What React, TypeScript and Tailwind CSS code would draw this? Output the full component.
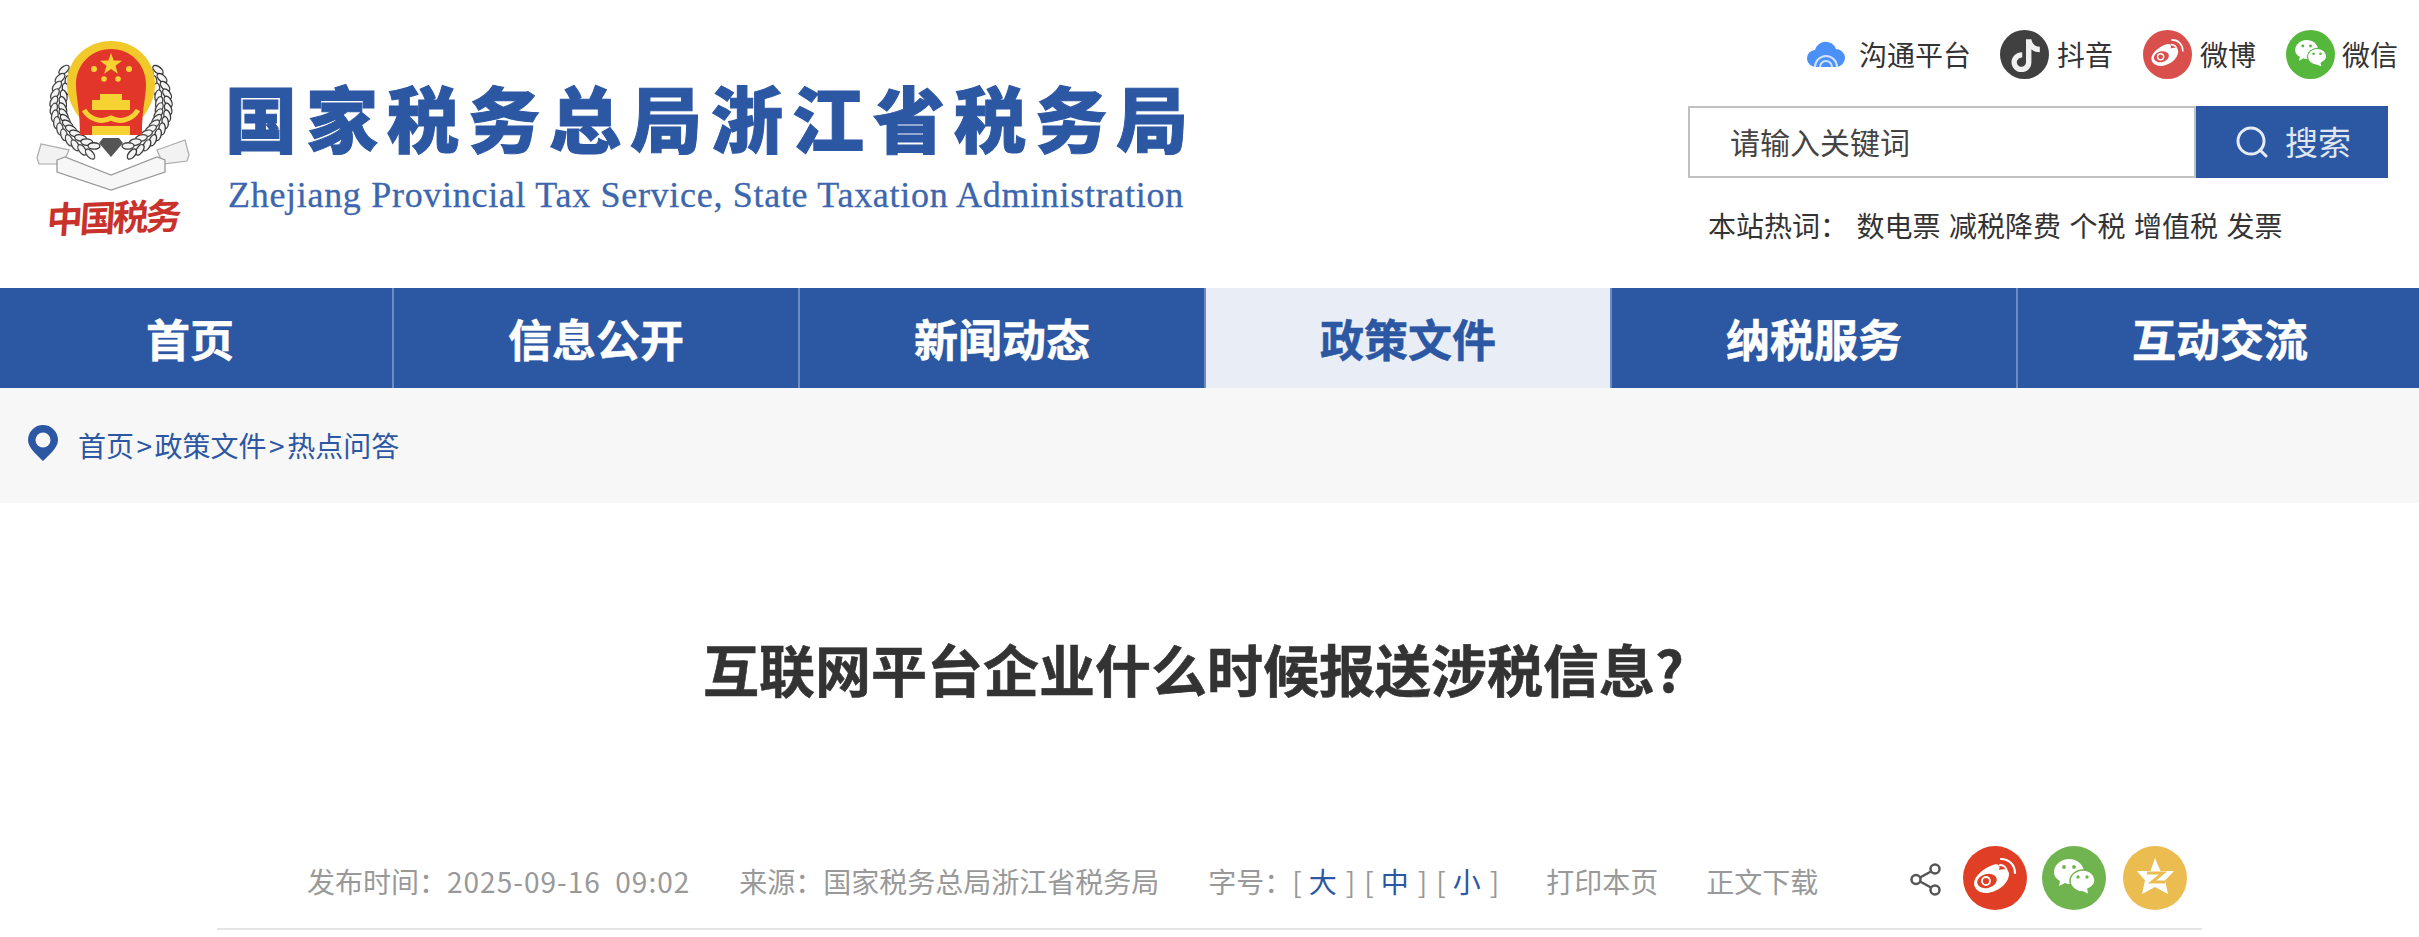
import React from "react";

const BLUE = "#2c57a3";

const navItems = ["首页", "信息公开", "新闻动态", "政策文件", "纳税服务", "互动交流"];
const hotWords = ["数电票", "减税降费", "个税", "增值税", "发票"];

// leaves of the wreath, placed along a curve
const leafPoints = (x0: number, y0: number, cx: number, cy: number, x1: number, y1: number) => {
  const pts = [];
  for (let i = 0; i <= 13; i++) {
    const t = i / 13;
    const x = (1 - t) * (1 - t) * x0 + 2 * t * (1 - t) * cx + t * t * x1;
    const y = (1 - t) * (1 - t) * y0 + 2 * t * (1 - t) * cy + t * t * y1;
    const dx = 2 * (1 - t) * (cx - x0) + 2 * t * (x1 - cx);
    const dy = 2 * (1 - t) * (cy - y0) + 2 * t * (y1 - cy);
    pts.push({ x, y, a: (Math.atan2(dy, dx) * 180) / Math.PI });
  }
  return pts;
};

const WeiboGlyph = ({ color }: { color: string }) => (
  <g fill="none" stroke="#fff">
    <path d="M30 19c5-2 8 1 6 5 6-2 10 0 10 4 0 10-13 19-23 19-7 0-12-4-12-10 0-6 9-15 19-18z" fill="#fff" stroke="none" />
    <ellipse cx="24" cy="35" rx="10" ry="7" fill={color} stroke="none" transform="rotate(-15 24 35)" />
    <circle cx="23" cy="35" r="4" strokeWidth="1.8" />
    <path d="M37 19c4 0 7 3 7 8" strokeWidth="2.200" strokeLinecap="round" />
    <path d="M38 13c8 0 14 6 14 14" strokeWidth="2.200" strokeLinecap="round" />
  </g>
);

const WechatGlyph = ({ color }: { color: string }) => (
  <g>
    <path d="M27 13c-8 0-15 6-15 13 0 4 2 7 6 9l-1 5 6-3c2 1 4 1 6 1 2-8 8-13 13-13-1-7-7-12-15-12z" fill="#fff" />
    <circle cx="22" cy="21" r="1.9" fill={color} />
    <circle cx="32" cy="21" r="1.9" fill={color} />
    <path
      d="M41 24c-7 0-13 5-13 11s6 11 13 11l6 3-1-6c4-2 7-5 7-8 0-6-5-11-12-11z"
      fill="#fff"
      stroke={color}
      strokeWidth="1.500"
    />
    <circle cx="36" cy="31" r="1.700" fill={color} />
    <circle cx="45" cy="31" r="1.700" fill={color} />
  </g>
);

const IconCircle = ({ color, size, children }: { color: string; size: string; children: React.ReactNode }) => (
  <svg viewBox="0 0 64 64" className={size}>
    <circle cx="32" cy="32" r="32" fill={color} />
    {children}
  </svg>
);

const Emblem = () => {
  const left = leafPoints(68, 72, 40, 125, 92, 150);
  const right = leafPoints(154, 72, 182, 125, 130, 150);
  return (
    <svg viewBox="36 40 154 152" className="w-[154px] h-[152px]">
      {[...left, ...right].map((p, i) => (
        <g key={i} transform={`translate(${p.x} ${p.y}) rotate(${p.a})`}>
          <ellipse cx="0" cy="-4.500" rx="6" ry="3.200" fill="#f4f4f4" stroke="#333" strokeWidth="1.300" transform="rotate(-24 0 -4.500)" />
          <ellipse cx="0" cy="4.500" rx="6" ry="3.200" fill="#f4f4f4" stroke="#444" strokeWidth="1.300" transform="rotate(24 0 4.500)" />
        </g>
      ))}
      <path d="M37 158l4-14 28 6-6 14-24 0z" fill="#f2f2f2" stroke="#aaa" strokeWidth="1.200" />
      <path d="M189 155l-4-15-28 10 6 14 24-3z" fill="#f2f2f2" stroke="#aaa" strokeWidth="1.200" />
      <path d="M57 160l8-3 46 18 46-18 8 3 0 12-54 18-54-18z" fill="#f7f7f7" stroke="#999" strokeWidth="1.300" />
      <path d="M99 143l12 14 12-14-4-5h-16z" fill="#555" />
      <path d="M111 41c25 0 44 19 44 43 0 16-8 28-13 34v17H80v-17c-5-6-13-18-13-34 0-24 19-43 44-43z" fill="#f2c92b" />
      <path d="M111 49c20 0 35 16 35 35 0 14-4 24-4 51H80c0-27-4-37-4-51 0-19 15-35 35-35z" fill="#e2362a" />
      <g fill="#f6d233">
        <path d="M111 53l2.700 7.600 8.300.2-6.500 5 2.300 7.900-6.800-4.600-6.800 4.600 2.300-7.900-6.500-5 8.300-.2z" />
        <circle cx="94" cy="69" r="3" />
        <circle cx="129" cy="69" r="3" />
        <circle cx="104" cy="79" r="2.800" />
        <circle cx="118" cy="79" r="2.800" />
        <path d="M100 94h22v6h8v10H92v-10h8z" />
        <path d="M92 126h38v9H92z" />
      </g>
      <path d="M84 110c6 10 18 13 27 8 9 5 21 2 27-8" fill="none" stroke="#f6d233" strokeWidth="5" />
    </svg>
  );
};

const App = () => {
  return (
    <div className="w-full h-[937px] overflow-hidden bg-white font-['Noto_Sans_CJK_SC','Liberation_Sans',sans-serif] text-[28px] text-[#333]">
      <header className="h-[288px] flex justify-between">
        <div className="flex pl-[36px]">
          <div className="w-[154px] shrink-0 pt-[40px] flex flex-col items-center">
            <Emblem />
            <div className="h-[46px] whitespace-nowrap text-[36px] leading-[46px] font-bold text-[#c8322b] -skew-x-6 -rotate-2 -tracking-[3px]">
              中国税务
            </div>
          </div>
          <div className="ml-[35px] pt-[66px]">
            <h1 className="text-[72px] leading-[100px] font-black text-[#2c57a3] tracking-[9px] whitespace-nowrap [-webkit-text-stroke:1px_#2c57a3]">
              国家税务总局浙江省税务局
            </h1>
            <p className="mt-[9px] ml-[3px] font-['Liberation_Serif',serif] text-[36px] leading-[40px] text-[#3c66ad] whitespace-nowrap tracking-[0.7px] [-webkit-text-stroke:0.3px_#3c66ad]">
              Zhejiang Provincial Tax Service, State Taxation Administration
            </p>
          </div>
        </div>
        <div className="w-[731px] shrink-0 pt-[30px] whitespace-nowrap">
          <div className="flex items-center h-[48px] pl-[119px]">
            <svg viewBox="0 0 38 27" className="w-[38px] h-[27px] shrink-0">
              <path d="M9 26a8.500 8.500 0 0 1-1-17A11 11 0 0 1 29 8a9 9 0 0 1 0 18z" fill="#4a90f7" />
              <g fill="none" stroke="#cfe2ff" strokeWidth="2">
                <path d="M8 26a11 11 0 0 1 22 0" />
                <path d="M13 26a6 6 0 0 1 12 0" />
              </g>
            </svg>
            <span className="ml-[14px] leading-[48px]">沟通平台</span>
            <svg viewBox="0 0 64 64" className="ml-[29px] w-[49px] h-[49px] shrink-0">
              <circle cx="32" cy="32" r="32" fill="#404040" />
              <path
                d="M34 12h7c1 6 5 10 11 10v7c-4 0-8-1-11-4v17c0 8-6 13-13 13s-13-6-13-13 6-13 14-13v7c-4 0-7 3-7 6s3 6 6 6 6-3 6-6z"
                fill="#f1f1f1"
              />
            </svg>
            <span className="ml-[8px] leading-[48px]">抖音</span>
            <IconCircle color="#d94f4c" size="ml-[30px] w-[49px] h-[49px] shrink-0">
              <WeiboGlyph color="#d94f4c" />
            </IconCircle>
            <span className="ml-[8px] leading-[48px]">微博</span>
            <IconCircle color="#55b73c" size="ml-[30px] w-[49px] h-[49px] shrink-0">
              <WechatGlyph color="#55b73c" />
            </IconCircle>
            <span className="ml-[7px] leading-[48px]">微信</span>
          </div>
          <div className="mt-[28px] flex h-[72px] w-[700px]">
            <div className="w-[508px] border-2 border-[#c0c0c0] pl-[40px] text-[30px] leading-[66px] text-[#444]">
              请输入关键词
            </div>
            <button className="w-[192px] flex items-center pl-[40px] bg-[#2c57a3] text-[33px] text-[#dfe6f2]">
              <svg viewBox="0 0 32 32" className="w-[32px] h-[32px]" fill="none" stroke="#e6ebf5" strokeWidth="3">
                <circle cx="15" cy="15" r="13" />
                <path d="M24 24l6 6" strokeLinecap="round" />
              </svg>
              <span className="ml-[17px]">搜索</span>
            </button>
          </div>
          <div className="mt-[26px] ml-[20px] flex gap-[8.500px] leading-[42px]">
            <span>本站热词：</span>
            {hotWords.map((w) => (
              <span key={w}>{w}</span>
            ))}
          </div>
        </div>
      </header>

      <nav className="flex h-[100px] -ml-[14px] w-[2436px] bg-[#2c57a3]">
        {navItems.map((item) => (
          <div
            key={item}
            className={
              item === "政策文件"
                ? "w-[406px] shrink-0 text-center text-[44px] font-bold leading-[100px] border-l-2 border-[#6b8cc2] bg-[#e9eef6] text-[#2c57a3] [-webkit-text-stroke:0.5px_#2c57a3]"
                : "w-[406px] shrink-0 text-center text-[44px] font-bold leading-[100px] border-l-2 border-[#6b8cc2] text-white [-webkit-text-stroke:0.5px_#fff]"
            }
          >
            {item}
          </div>
        ))}
      </nav>

      <div className="h-[115px] bg-[#f7f7f7] flex items-center pl-[28px] text-[#2c57a3]">
        <svg viewBox="0 0 30 36" className="w-[30px] h-[36px] -mt-[5px]">
          <path d="M15 0a15 15 0 0 1 15 15c0 8-9 15-15 21C9 30 0 23 0 15A15 15 0 0 1 15 0z" fill={BLUE} />
          <circle cx="15" cy="15" r="7.500" fill="#f7f7f7" />
        </svg>
        <span className="ml-[20px] whitespace-nowrap leading-[40px] -mt-[2px]">
          首页<span className="mx-[2.500px]">&gt;</span>政策文件<span className="mx-[2.500px]">&gt;</span>热点问答
        </span>
      </div>

      <h2 className="mt-[123px] pr-[32px] text-center text-[56px] leading-[84px] font-bold text-[#333] [-webkit-text-stroke:0.6px_#333]">
        互联网平台企业什么时候报送涉税信息?
      </h2>

      <div className="mt-[136px] mx-[217px] h-[84px] border-b-2 border-[#e5e5e5] flex items-start text-[#999] whitespace-nowrap">
        <span className="ml-[90px] mt-[15px] leading-[40px]">
          发布时间：<span className="tracking-[1px]">2025-09-16&nbsp;&nbsp;09:02</span>
        </span>
        <span className="ml-[49px] mt-[15px] leading-[40px]">来源：国家税务总局浙江省税务局</span>
        <span className="ml-[49px] mt-[15px] leading-[40px] flex">
          字号：
          {["大", "中", "小"].map((s) => (
            <span key={s} className="mr-[9px]">
              [<span className="ml-[7px] mr-[9px] text-[#2c57a3]">{s}</span>]
            </span>
          ))}
        </span>
        <span className="ml-[38px] mt-[15px] leading-[40px]">打印本页</span>
        <span className="ml-[48px] mt-[15px] leading-[40px]">正文下载</span>
        <svg viewBox="0 0 32 33" className="ml-[92px] mt-[17px] w-[32px] h-[33px] shrink-0" fill="none" stroke="#555" strokeWidth="2.500">
          <circle cx="6" cy="16.500" r="4.500" />
          <circle cx="25" cy="6" r="4.500" />
          <circle cx="25" cy="27" r="4.500" />
          <path d="M10 14.500l11-6M10 18.500l11 6" />
        </svg>
        <IconCircle color="#e03f25" size="ml-[21px] w-[64px] h-[64px] shrink-0">
          <WeiboGlyph color="#e03f25" />
        </IconCircle>
        <IconCircle color="#70b450" size="ml-[15px] w-[64px] h-[64px] shrink-0">
          <WechatGlyph color="#70b450" />
        </IconCircle>
        <IconCircle color="#ebbd50" size="ml-[17px] w-[64px] h-[64px] shrink-0">
          <path d="M32 12l5.500 13H51l-9 9.500L45 48 32 41 19 48l3-13.500L14 25h13.500z" fill="#fff" />
          <path d="M24 27h16l-11 9h13" fill="none" stroke="#ebbd50" strokeWidth="3" />
        </IconCircle>
      </div>
    </div>
  );
};

export default App;
